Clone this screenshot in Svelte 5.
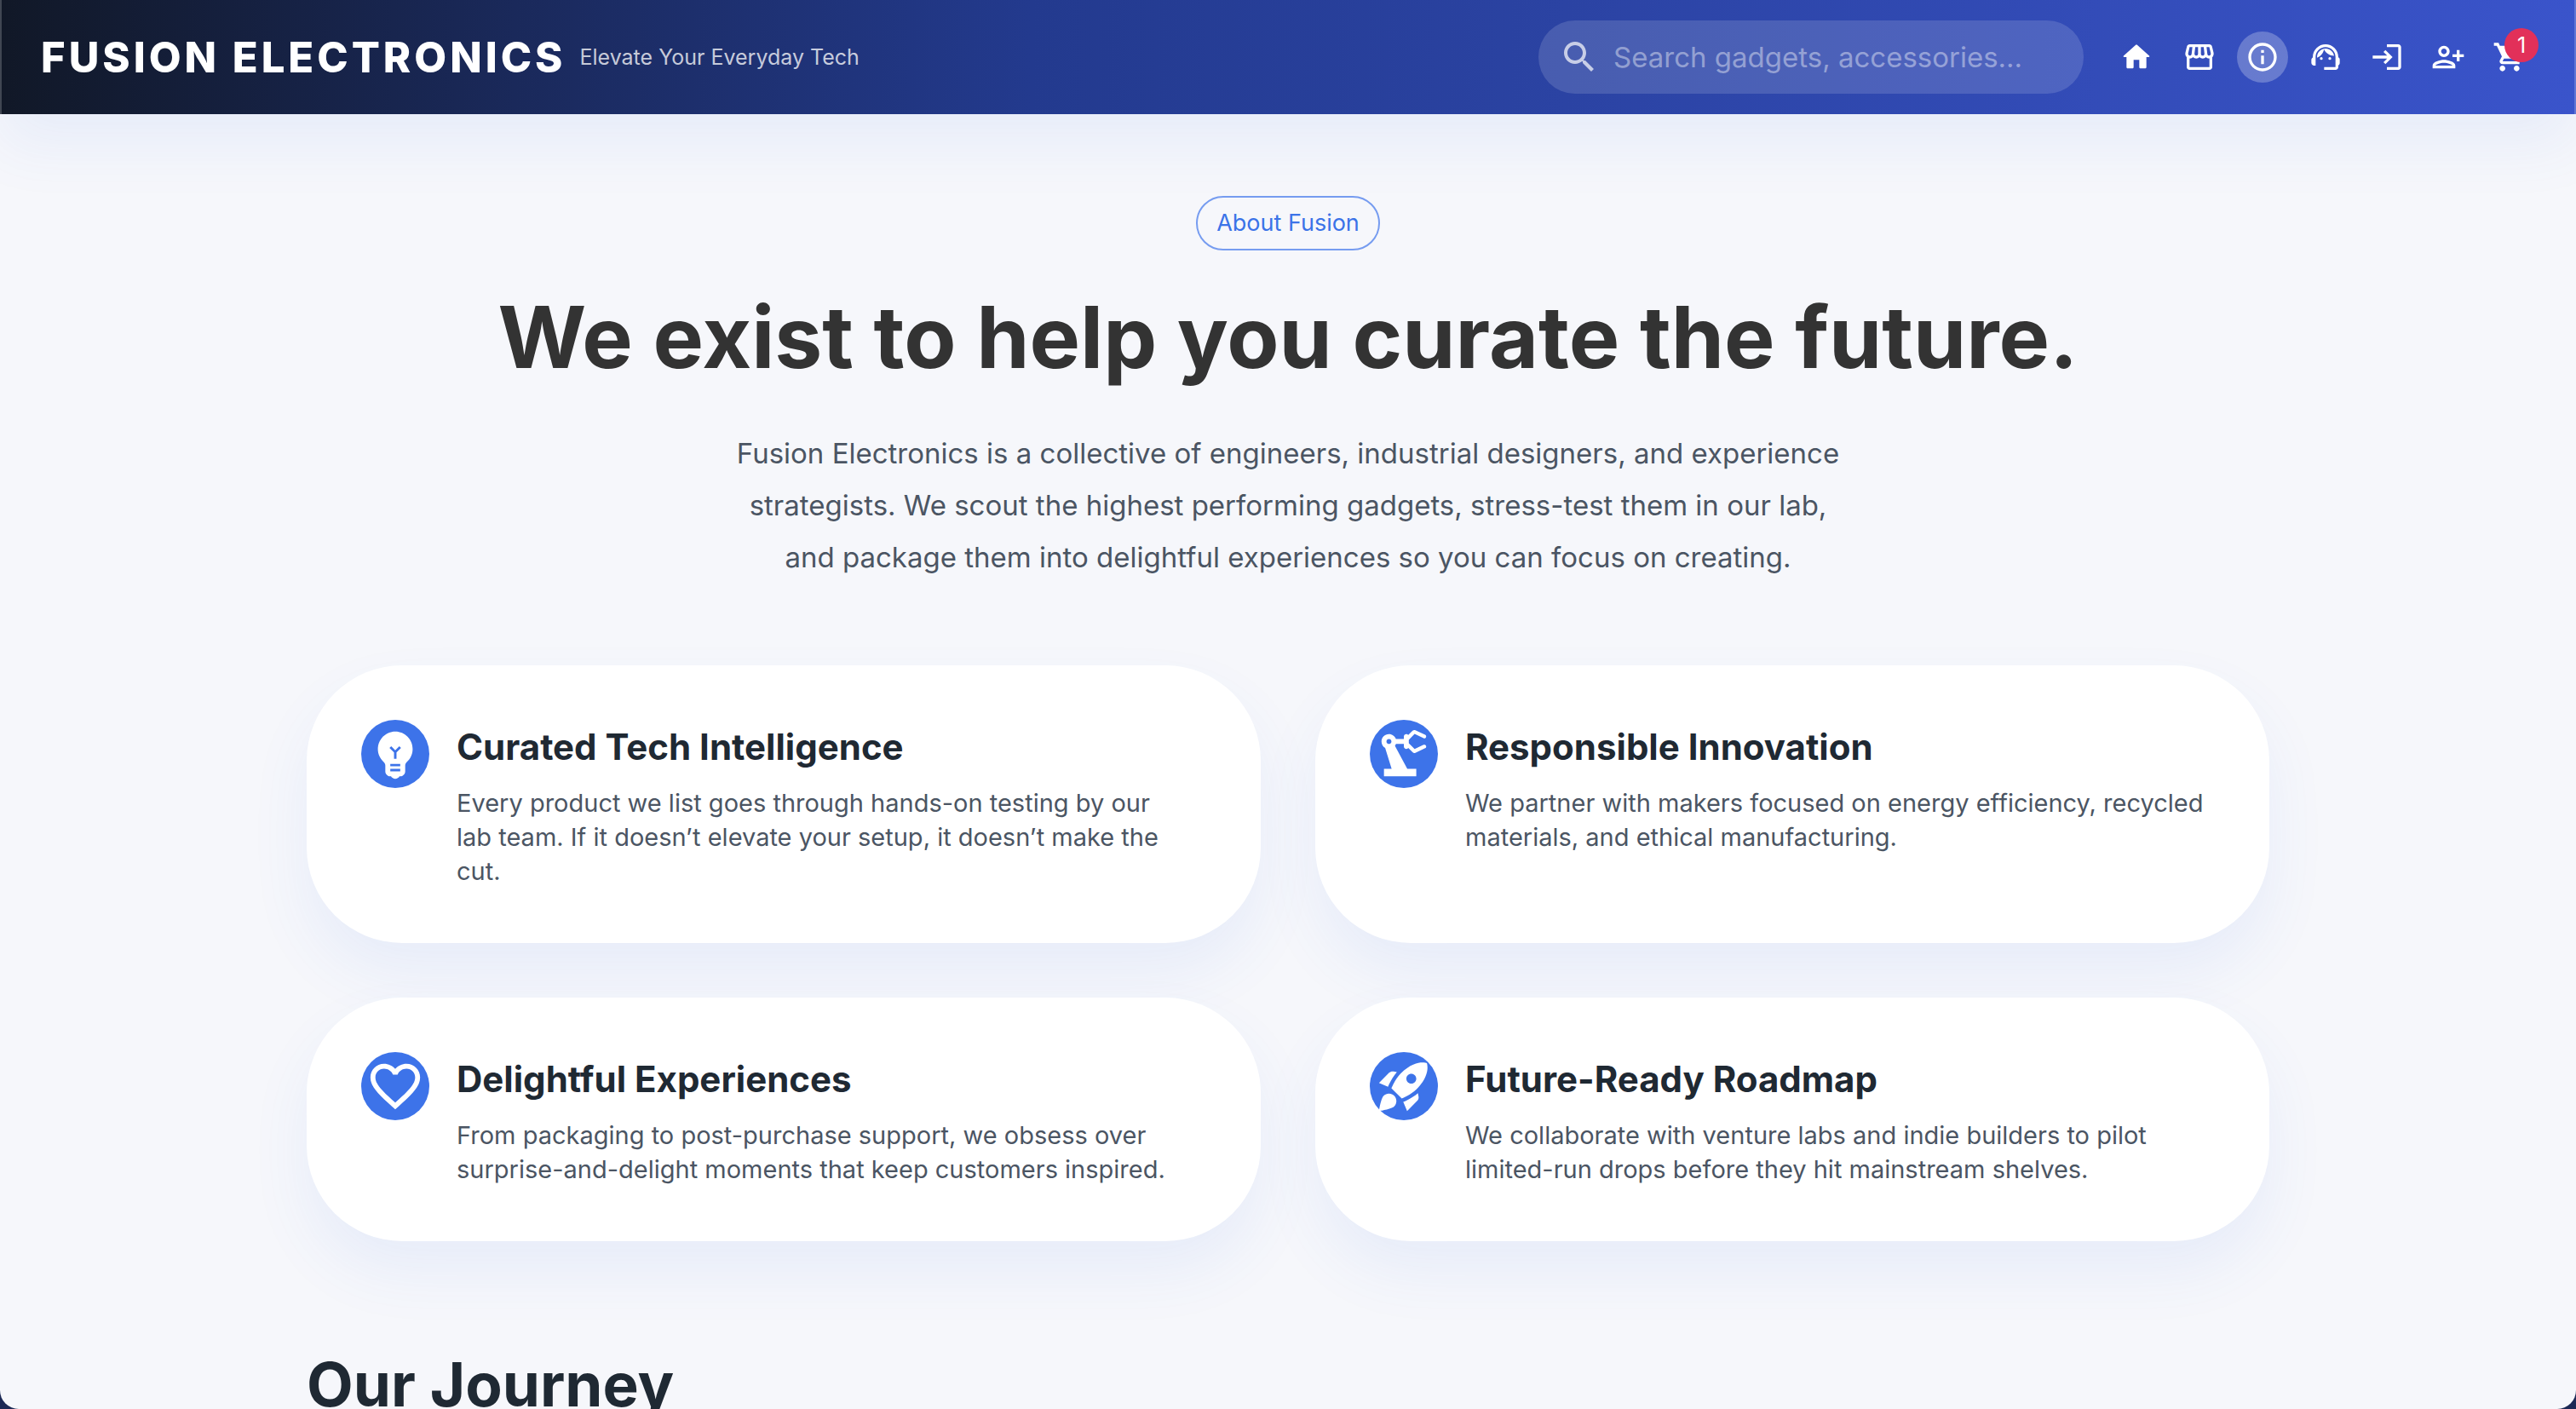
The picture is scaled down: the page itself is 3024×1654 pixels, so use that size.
<script>
  const mainLinks = [
    {
      label: 'Home',
      paths: ['M10 19v-5h4v5c0 .55.45 1 1 1h3c.55 0 1-.45 1-1v-7h1.7c.46 0 .68-.57.33-.87L12.67 3.6c-.38-.34-.96-.34-1.34 0l-8.36 7.53c-.34.3-.13.87.33.87H5v7c0 .55.45 1 1 1h3c.55 0 1-.45 1-1z'],
    },
    {
      label: 'Shop',
      paths: ['M21.9 8.89l-1.05-4.37c-.22-.9-1-1.52-1.91-1.52H5.05c-.9 0-1.69.63-1.9 1.52L2.1 8.89c-.24 1.02-.02 2.06.62 2.88.08.11.19.19.28.29V19c0 1.1.9 2 2 2h14c1.1 0 2-.9 2-2v-6.94c.09-.09.2-.18.28-.28.64-.82.87-1.87.62-2.89zm-2.99-3.9l1.05 4.37c.1.42.01.84-.25 1.17-.14.18-.44.47-.94.47-.61 0-1.14-.49-1.21-1.14L16.98 5l1.93-.01zM13 5h1.96l.54 4.52c.05.39-.07.78-.33 1.07-.22.26-.54.41-.95.41-.67 0-1.22-.59-1.22-1.31V5zM8.49 9.52L9.04 5H11v4.69c0 .72-.55 1.31-1.29 1.31-.34 0-.65-.15-.89-.41-.25-.29-.37-.68-.33-1.07zm-4.45-.16L5.05 5h1.97l-.58 4.86c-.08.65-.6 1.14-1.21 1.14-.49 0-.8-.29-.93-.47-.27-.32-.36-.75-.26-1.17zM5 19v-6.03c.08.01.15.03.23.03.87 0 1.66-.36 2.24-.95.6.6 1.4.95 2.31.95.87 0 1.65-.36 2.23-.93.59.57 1.39.93 2.29.93.84 0 1.64-.35 2.24-.95.58.59 1.37.95 2.24.95.08 0 .15-.02.23-.03V19H5z'],
    },
    {
      label: 'About',
      active: true,
      paths: ['M11 7h2v2h-2zm0 4h2v6h-2zm1-9C6.48 2 2 6.48 2 12s4.48 10 10 10 10-4.48 10-10S17.52 2 12 2zm0 18c-4.41 0-8-3.59-8-8s3.59-8 8-8 8 3.59 8 8-3.59 8-8 8z'],
    },
    {
      label: 'Support',
      paths: [
        'M21 12.22C21 6.73 16.74 3 12 3c-4.69 0-9 3.65-9 9.28-.6.34-1 .98-1 1.72v2c0 1.1.9 2 2 2h1v-6.1c0-3.87 3.13-7 7-7s7 3.13 7 7V19h-8v2h8c1.1 0 2-.9 2-2v-1.22c.59-.31 1-.92 1-1.64v-2.3c0-.7-.41-1.31-1-1.62z',
        'M8 13a1 1 0 1 0 2 0a1 1 0 1 0-2 0zM14 13a1 1 0 1 0 2 0a1 1 0 1 0-2 0z',
        'M18 11.03C17.52 8.18 15.04 6 12.05 6c-3.03 0-6.29 2.51-6.03 6.45 2.47-1.01 4.33-3.21 4.86-5.89 1.31 2.63 4 4.44 7.12 4.47z',
      ],
    },
  ];

  const accountLinks = [
    {
      label: 'Log in',
      paths: ['M11 7L9.6 8.4l2.6 2.6H2v2h10.2l-2.6 2.6L11 17l5-5-5-5zm9 12h-8v2h8c1.1 0 2-.9 2-2V5c0-1.1-.9-2-2-2h-8v2h8v14z'],
    },
    {
      label: 'Register',
      paths: ['M13 8c0-2.21-1.79-4-4-4S5 5.79 5 8s1.79 4 4 4 4-1.79 4-4zm-2 0c0 1.1-.9 2-2 2s-2-.9-2-2 .9-2 2-2 2 .9 2 2zM1 18v2h16v-2c0-2.66-5.33-4-8-4s-8 1.34-8 4zm2 0c.2-.71 3.3-2 6-2 2.69 0 5.78 1.28 6 2H3zM20 15v-3h3v-2h-3V7h-2v3h-3v2h3v3h2z'],
    },
    {
      label: 'Cart',
      badge: 1,
      paths: ['M7 18c-1.1 0-1.99.9-1.99 2S5.9 22 7 22s2-.9 2-2-.9-2-2-2zM1 2v2h2l3.6 7.59-1.35 2.45c-.16.28-.25.61-.25.96 0 1.1.9 2 2 2h12v-2H7.42c-.14 0-.25-.11-.25-.25l.03-.12.9-1.63h7.45c.75 0 1.41-.41 1.75-1.03l3.58-6.49c.08-.14.12-.31.12-.48 0-.55-.45-1-1-1H5.21l-.94-2H1zm16 16c-1.1 0-1.99.9-1.99 2s.89 2 1.99 2 2-.9 2-2-.9-2-2-2z'],
    },
  ];

  const values = [
    {
      title: 'Curated Tech Intelligence',
      text: 'Every product we list goes through hands-on testing by our lab\u00a0team. If it doesn’t elevate your setup, it doesn’t make the cut.',
      icon: 'M12 3c-.46 0-.93.04-1.4.14-2.76.53-4.96 2.76-5.48 5.52-.48 2.61.48 5.01 2.22 6.56.43.38.66.91.66 1.47V19c0 1.1.9 2 2 2h.28c.35.6.98 1 1.72 1s1.38-.4 1.72-1H14c1.1 0 2-.9 2-2v-2.31c0-.55.22-1.09.64-1.46C18.09 13.95 19 12.08 19 10c0-3.87-3.13-7-7-7zm2 16h-4v-1h4v1zm0-2h-4v-1h4v1zm-1.5-5.59V14h-1v-2.59L9.67 9.59l.71-.71L12 10.5l1.62-1.62.71.71-1.83 1.82z',
    },
    {
      title: 'Responsible Innovation',
      text: 'We partner with makers focused on energy efficiency, recycled materials, and ethical manufacturing.',
      icon: 'M19.93 8.35l-3.6 1.68L14 7.7V6.3l2.33-2.33 3.6 1.68c.38.18.82.01 1-.36.18-.38.01-.82-.36-1l-3.92-1.83c-.38-.18-.83-.1-1.13.2L13.78 4.4c-.18-.24-.46-.4-.78-.4-.55 0-1 .45-1 1v1H8.82C8.4 4.84 7.3 4 6 4 4.34 4 3 5.34 3 7c0 1.1.6 2.05 1.48 2.58L7.08 18H4v3h13v-3h-3.62L8.41 8.77c.17-.24.31-.49.41-.77H12v1c0 .55.45 1 1 1 .32 0 .6-.16.78-.4l1.74 1.74c.3.3.75.38 1.13.2l3.92-1.83c.38-.18.54-.62.36-1-.18-.37-.62-.54-1-.36zM6 8c-.55 0-1-.45-1-1s.45-1 1-1 1 .45 1 1-.45 1-1 1z',
    },
    {
      title: 'Delightful Experiences',
      text: 'From packaging to post-purchase support, we obsess over surprise-and-delight moments that keep customers inspired.',
      icon: 'M16.5 3c-1.74 0-3.41.81-4.5 2.09C10.91 3.81 9.24 3 7.5 3 4.42 3 2 5.42 2 8.5c0 3.78 3.4 6.86 8.55 11.54L12 21.35l1.45-1.32C18.6 15.36 22 12.28 22 8.5 22 5.42 19.58 3 16.5 3zm-4.4 15.55l-.1.1-.1-.1C7.14 14.24 4 11.39 4 8.5 4 6.5 5.5 5 7.5 5c1.54 0 3.04.99 3.57 2.36h1.87C13.46 5.99 14.96 5 16.5 5c2 0 3.5 1.5 3.5 3.5 0 2.89-3.14 5.74-7.9 10.05z',
    },
    {
      title: 'Future-Ready Roadmap',
      text: 'We collaborate with venture labs and indie builders to pilot limited-run drops before they hit mainstream shelves.',
      icon: 'M9.19 6.35c-2.04 2.29-3.44 5.58-3.57 5.89L2 10.69l4.05-4.05c.47-.47 1.15-.68 1.81-.55l1.33.26zM11.17 17s3.74-1.55 5.89-3.7c5.4-5.4 4.5-9.62 4.21-10.57-.95-.3-5.17-1.19-10.57 4.21C8.55 9.09 7 12.83 7 12.83L11.17 17zm6.48-2.19c-2.29 2.04-5.58 3.44-5.89 3.57L13.31 22l4.05-4.05c.47-.47.68-1.15.55-1.81l-.26-1.33zM9 18c0 .83-.34 1.58-.88 2.12C6.94 21.3 2 22 2 22s.7-4.94 1.88-6.12C4.42 15.34 5.17 15 6 15c1.66 0 3 1.34 3 3zm4-9c0-1.1.9-2 2-2s2 .9 2 2-.9 2-2 2-2-.9-2-2z',
    },
  ];
</script>

{#snippet navLink(link)}
  <a class="nav-link" class:active={link.active} href="#{link.label.toLowerCase().replace(' ', '-')}" aria-label={link.label} aria-current={link.active ? 'page' : undefined}>
    <svg viewBox="0 0 24 24" aria-hidden="true">
      {#each link.paths as d}<path {d} />{/each}
    </svg>
    {#if link.badge}<span class="badge">{link.badge}</span>{/if}
  </a>
{/snippet}

<div class="page">
  <header>
    <div class="brand">
      <a class="logo" href="#home">FUSION ELECTRONICS</a>
      <span class="tagline">Elevate Your Everyday Tech</span>
    </div>
    <label class="search">
      <svg viewBox="0 0 24 24" aria-hidden="true">
        <path d="M15.5 14h-.79l-.28-.27C15.41 12.59 16 11.11 16 9.5 16 5.91 13.09 3 9.5 3S3 5.91 3 9.5 5.91 16 9.5 16c1.61 0 3.09-.59 4.23-1.57l.27.28v.79l5 4.99L20.49 19l-4.99-5zm-6 0C7.01 14 5 11.99 5 9.5S7.01 5 9.5 5 14 7.01 14 9.5 11.99 14 9.5 14z" />
      </svg>
      <input type="text" placeholder="Search gadgets, accessories..." aria-label="Search products" />
    </label>
    <nav aria-label="Main">
      <div class="nav-main">
        {#each mainLinks as link}{@render navLink(link)}{/each}
      </div>
      <div class="nav-account">
        {#each accountLinks as link}{@render navLink(link)}{/each}
      </div>
    </nav>
  </header>

  <main>
    <section class="hero">
      <span class="chip">About Fusion</span>
      <h1>We exist to help you curate the future.</h1>
      <p>
        Fusion Electronics is a collective of engineers, industrial designers, and experience strategists. We scout the
        highest performing gadgets, stress-test them in our lab, and package them into delightful experiences so you can
        focus on creating.
      </p>
    </section>

    <section class="cards">
      {#each values as value}
        <article>
          <span class="avatar">
            <svg viewBox="0 0 24 24" aria-hidden="true"><path d={value.icon} /></svg>
          </span>
          <div class="copy">
            <h3>{value.title}</h3>
            <p>{value.text}</p>
          </div>
        </article>
      {/each}
    </section>

    <section class="journey">
      <h2>Our Journey</h2>
    </section>
  </main>
</div>

<style>
  :global(body) {
    margin: 0;
    background: #1c2955;
  }

  .page {
    height: 100vh;
    overflow: hidden;
    border-radius: 0 0 22px 22px;
    background: #f6f7fb;
    color: #1f2933;
    font-family: Inter, 'Open Sans', sans-serif;
  }

  h1, h2, h3, p {
    margin: 0;
  }

  svg {
    display: block;
    flex: none;
    fill: currentColor;
  }

  header {
    display: flex;
    align-items: center;
    gap: 32px;
    height: 134px;
    padding: 0 48px;
    color: #fff;
    background: linear-gradient(90deg, #111827 0%, #233a8e 40%, #3a54cb 100%);
    box-shadow:
      inset 2px 0 rgba(255, 255, 255, 0.2),
      inset -2px 0 rgba(255, 255, 255, 0.2),
      0 36px 70px rgba(59, 114, 232, 0.08);
  }

  .brand {
    display: flex;
    flex: 1;
    align-items: center;
    gap: 16px;
    white-space: nowrap;
  }

  .logo {
    color: #fff;
    font-size: 49px;
    font-weight: 800;
    letter-spacing: 4px;
    text-decoration: none;
  }

  .tagline {
    font-size: 25px;
    color: rgba(255, 255, 255, 0.75);
  }

  .search {
    display: flex;
    align-items: center;
    gap: 16px;
    box-sizing: border-box;
    width: 640px;
    height: 86px;
    padding: 0 24px;
    border-radius: 43px;
    background: rgba(255, 255, 255, 0.14);
  }

  .search svg {
    width: 48px;
    height: 48px;
    color: rgba(255, 255, 255, 0.7);
  }

  .search input {
    flex: 1;
    min-width: 0;
    padding: 0;
    border: 0;
    outline: 0;
    background: none;
    color: #fff;
    font: inherit;
    font-size: 33px;
  }

  .search input::placeholder {
    color: rgba(255, 255, 255, 0.42);
    opacity: 1;
  }

  nav {
    display: flex;
    gap: 12px;
  }

  .nav-main {
    display: flex;
    gap: 14px;
  }

  .nav-account {
    display: flex;
    gap: 12px;
  }

  .nav-link {
    position: relative;
    display: grid;
    place-items: center;
    width: 60px;
    height: 60px;
    border-radius: 50%;
    color: #fff;
    text-decoration: none;
  }

  .nav-link.active {
    background: rgba(255, 255, 255, 0.25);
  }

  .nav-link svg {
    width: 40px;
    height: 40px;
  }

  .badge {
    position: absolute;
    top: -4px;
    right: -4px;
    width: 40px;
    height: 40px;
    border-radius: 50%;
    background: #e23059;
    font-size: 25px;
    line-height: 40px;
    text-align: center;
  }

  main {
    max-width: 2304px;
    margin: 0 auto;
    padding: 96px 48px 0;
  }

  .hero {
    display: flex;
    flex-direction: column;
    align-items: center;
    text-align: center;
  }

  .chip {
    box-sizing: border-box;
    height: 64px;
    padding: 0 22px;
    border: 2px solid #769cf0;
    border-radius: 32px;
    color: #3b73e8;
    font-size: 27px;
    line-height: 60px;
  }

  h1 {
    margin-top: 46px;
    color: #333;
    font-size: 100px;
    font-weight: 700;
    line-height: 112px;
  }

  .hero p {
    max-width: 1320px;
    margin-top: 50px;
    color: #4b5563;
    font-size: 33px;
    line-height: 61px;
  }

  .cards {
    display: grid;
    grid-template-columns: 1fr 1fr;
    gap: 64px;
    margin-top: 96px;
  }

  article {
    display: flex;
    gap: 32px;
    padding: 64px;
    border-radius: 112px;
    background: #fff;
    box-shadow: 0 36px 70px rgba(59, 114, 232, 0.08);
  }

  .avatar {
    display: grid;
    flex: none;
    place-items: center;
    width: 80px;
    height: 80px;
    border-radius: 50%;
    color: #fff;
    background: #3d73e9;
  }

  .avatar svg {
    width: 70px;
    height: 70px;
  }

  .copy {
    padding-right: 8px;
  }

  h3 {
    font-size: 42px;
    font-weight: 700;
    line-height: 64px;
  }

  .copy p {
    margin-top: 14px;
    color: #4b5563;
    font-size: 29px;
    line-height: 40px;
  }

  .journey {
    margin-top: 112px;
  }

  h2 {
    font-size: 71px;
    font-weight: 700;
    line-height: 112px;
  }
</style>
